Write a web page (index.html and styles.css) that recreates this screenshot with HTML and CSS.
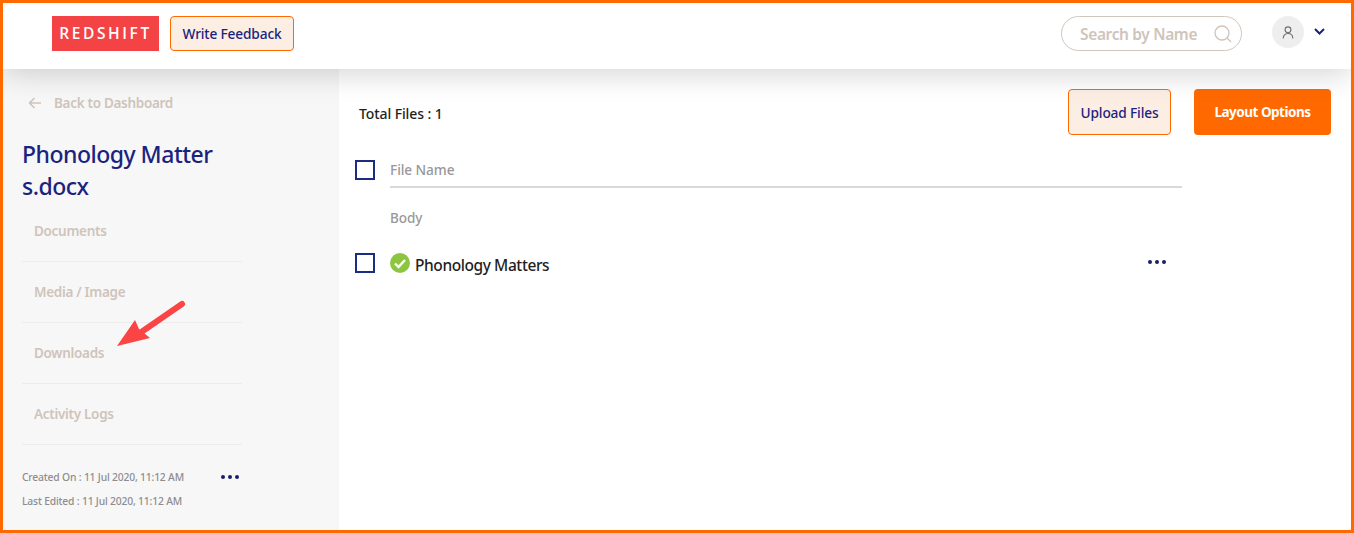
FILE: index.html
```html
<!DOCTYPE html>
<html lang="en">
<head>
  <meta charset="UTF-8" />
  <title>Redshift - Phonology Matters</title>
  <link rel="stylesheet" href="styles.css">
</head>
<body>
  <div class="frame">
    <header class="topbar">
      <div class="logo">REDSHIFT</div>
      <button class="btn-outline feedback">Write Feedback</button>
      <div class="topbar-right">
        <div class="search">
          <span>Search by Name</span>
          <svg width="18" height="18" viewBox="0 0 18 18" fill="none" stroke="#cfc4ba" stroke-width="1.3">
            <circle cx="8" cy="8" r="7"/>
            <path d="M13 13l4 4"/>
          </svg>
        </div>
        <div class="avatar">
          <svg width="12" height="13" viewBox="0 0 12 13" fill="none" stroke="#6d6d73" stroke-width="1.1">
            <circle cx="6" cy="3.8" r="2.9"/>
            <path d="M1.2 12.5c0-3 1.800-5 4.800-5s4.800 2 4.800 5"/>
          </svg>
        </div>
        <svg class="caret" width="11" height="7" viewBox="0 0 11 7" fill="none" stroke="#1a237e" stroke-width="2">
          <path d="M1 1l4.500 4.500L10 1"/>
        </svg>
      </div>
    </header>

    <div class="layout">
      <aside class="sidebar">
        <div class="back">
          <svg width="13" height="12" viewBox="0 0 13 12" fill="none" stroke="#cfc4ba" stroke-width="1.6">
            <path d="M13 6H1.500M6.500 1L1.500 6l5 5"/>
          </svg>
          <span>Back to Dashboard</span>
        </div>
        <h1 class="doc-title">Phonology Matter<br>s.docx</h1>
        <nav class="side-nav">
          <a>Documents</a>
          <a>Media / Image</a>
          <a>Downloads</a>
          <a>Activity Logs</a>
        </nav>
        <div class="meta">
          <div class="meta-row">
            <span>Created On : 11 Jul 2020, 11:12 AM</span>
            <span class="dots"><i></i><i></i><i></i></span>
          </div>
          <div class="meta-row">
            <span>Last Edited : 11 Jul 2020, 11:12 AM</span>
          </div>
        </div>
      </aside>

      <main class="content">
        <div class="toolbar">
          <span class="total">Total Files : 1</span>
          <button class="btn-outline upload">Upload Files</button>
          <button class="btn-solid">Layout Options</button>
        </div>
        <div class="file-list">
          <div class="file-head">
            <span class="check"></span>
            <span class="col-name">File Name</span>
          </div>
          <div class="section-label">Body</div>
          <div class="file-row">
            <span class="check"></span>
            <svg class="ok" width="20" height="20" viewBox="0 0 20 20">
              <circle cx="10" cy="10" r="10" fill="#8cc63f"/>
              <path d="M5 10.500l3.500 3.500L15 7" fill="none" stroke="#fff" stroke-width="2.400"/>
            </svg>
            <span class="file-name">Phonology Matters</span>
            <span class="dots"><i></i><i></i><i></i></span>
          </div>
        </div>
      </main>
    </div>

    <svg class="arrow" width="72" height="52" viewBox="0 0 72 52">
      <path d="M65 5L20 36" stroke="#fb4444" stroke-width="6" stroke-linecap="round" fill="none"/>
      <path d="M0 47L18 21l4 9 11 9z" fill="#fb4444"/>
    </svg>
  </div>
</body>
</html>
```

FILE: styles.css
```css
* {
  box-sizing: border-box;
  margin: 0;
  padding: 0;
}

body {
  background: #fff;
  font-family: "Noto Sans", sans-serif;
  color: #1e1e1e;
}

.frame {
  position: relative;
  width: 1354px;
  height: 533px;
  border: 3px solid #ff6900;
  overflow: hidden;
  display: flex;
  flex-direction: column;
}

.topbar {
  height: 66px;
  flex: none;
  background: #fff;
  display: flex;
  align-items: flex-start;
  padding: 13px 0 0 49px;
  box-shadow: 0 4px 30px rgba(0, 0, 0, 0.18);
  position: relative;
  z-index: 2;
}

.logo {
  width: 107px;
  height: 35px;
  background: #f44344;
  color: #fff;
  font-family: "Open Sans", sans-serif;
  font-weight: 600;
  font-size: 15.500px;
  letter-spacing: 2.600px;
  line-height: 35px;
  text-align: center;
}

.btn-outline {
  background: #fdeee3;
  border: 1px solid #ff6900;
  border-radius: 4px;
  color: #1a237e;
  font-family: inherit;
  font-size: 13.700px;
  font-weight: 500;
  letter-spacing: -0.150px;
}

.feedback {
  width: 124px;
  height: 35px;
  margin-left: 11px;
}

.topbar-right {
  margin-left: auto;
  display: flex;
  align-items: flex-start;
  padding-right: 26px;
}

.search {
  width: 181px;
  height: 35px;
  border: 1px solid #d2c7bc;
  border-radius: 18px;
  display: flex;
  align-items: center;
  justify-content: space-between;
  padding: 0 9px 0 18px;
  color: #cfc4ba;
  font-size: 15.500px;
  font-weight: 600;
  letter-spacing: -0.350px;
}

.avatar {
  width: 32px;
  height: 32px;
  margin-left: 30px;
  border-radius: 50%;
  background: #eee;
  display: flex;
  align-items: center;
  justify-content: center;
}

.caret {
  margin: 12px 0 0 10px;
}

.layout {
  flex: 1;
  display: flex;
  min-height: 0;
}

.sidebar {
  width: 336px;
  flex: none;
  background: #f7f7f7;
  padding: 22px 97px 0 19px;
}

.back {
  display: flex;
  align-items: center;
  gap: 13px;
  padding-left: 6px;
  height: 24px;
  color: #cfc4ba;
  font-size: 13.500px;
  font-weight: 600;
  letter-spacing: -0.300px;
}

.doc-title {
  margin-top: 23px;
  color: #1a237e;
  font-size: 23px;
  font-weight: 500;
  line-height: 32px;
  letter-spacing: -0.500px;
  white-space: nowrap;
}

.side-nav {
  margin-top: -1px;
}

.side-nav a {
  display: block;
  height: 61px;
  padding: 20px 0 0 12px;
  border-bottom: 1px solid #ececec;
  color: #cfc4ba;
  font-size: 13.500px;
  font-weight: 600;
  letter-spacing: -0.300px;
  line-height: 20px;
}

.meta {
  margin-top: 20px;
  color: #8d8d8f;
  font-size: 10.300px;
  font-weight: 500;
  letter-spacing: -0.170px;
}

.meta-row {
  height: 24px;
  display: flex;
  justify-content: space-between;
  align-items: center;
}

.dots {
  display: flex;
  gap: 3px;
  margin-right: 3px;
}

.dots i {
  width: 4px;
  height: 4px;
  border-radius: 50%;
  background: #1a1f66;
}

.content {
  flex: 1;
  padding: 20px 20px 0 16px;
}

.toolbar {
  display: flex;
  align-items: center;
  height: 46px;
}

.total {
  margin-left: 4px;
  margin-right: auto;
  padding-top: 2px;
  font-size: 14px;
  font-weight: 500;
  letter-spacing: -0.100px;
}

.upload {
  width: 103px;
  height: 46px;
}

.btn-solid {
  width: 137px;
  height: 46px;
  margin-left: 23px;
  background: #ff6900;
  border: none;
  border-radius: 4px;
  color: #fff;
  font-family: inherit;
  font-size: 13.500px;
  font-weight: 700;
  letter-spacing: -0.500px;
}

.file-list {
  width: 827px;
  margin-top: 25px;
}

.check {
  width: 20px;
  height: 20px;
  flex: none;
  border: 2px solid #1a2d80;
}

.file-head {
  display: flex;
  align-items: flex-start;
  height: 30px;
  margin-top: 9px;
}

.col-name {
  flex: 1;
  height: 28px;
  margin-left: 15px;
  border-bottom: 2px solid #d9d9d9;
  color: #98989a;
  font-size: 13.700px;
  font-weight: 500;
  line-height: 20px;
  letter-spacing: -0.100px;
}

.section-label {
  margin: 18px 0 0 35px;
  color: #98989a;
  font-size: 13.500px;
  font-weight: 500;
  line-height: 20px;
  letter-spacing: -0.100px;
}

.file-row {
  display: flex;
  align-items: center;
  height: 20px;
  margin-top: 25px;
}

.ok {
  margin-left: 15px;
}

.file-name {
  margin-left: 5px;
  padding-top: 4px;
  flex: 1;
  font-size: 15.500px;
  font-weight: 500;
  letter-spacing: -0.420px;
}

.file-row .dots {
  margin: -3px 16px 0 0;
}

.arrow {
  position: absolute;
  left: 114px;
  top: 296px;
}
```
